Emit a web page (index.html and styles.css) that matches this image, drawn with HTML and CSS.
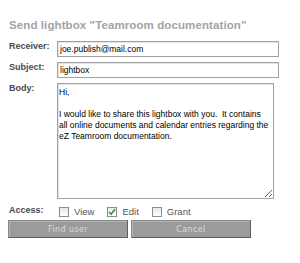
FILE: index.html
```html
<!DOCTYPE html>
<html lang="en">
<head>
    <meta charset="UTF-8">
    <title>Send lightbox</title>
    <link rel="stylesheet" href="styles.css">
</head>
<body>

<div class="send-box">
    <h2 class="send-title">Send lightbox "Teamroom documentation"</h2>

    <!-- Message fields -->
    <div class="send-form">
        <label class="field-label" for="receiver">Receiver:</label>
        <input class="field-input" id="receiver" type="text" value="joe.publish@mail.com">

        <label class="field-label" for="subject">Subject:</label>
        <input class="field-input" id="subject" type="text" value="lightbox">

        <label class="field-label" for="body">Body:</label>
        <textarea class="field-body" id="body" wrap="off">Hi,

I would like to share this lightbox with you.  It contains
all online documents and calendar entries regarding the
eZ Teamroom documentation.</textarea>

        <span class="field-label access-label">Access:</span>
        <div class="access-options">
            <label class="access-option"><span class="check-box"></span>View</label>
            <label class="access-option"><span class="check-box">
                <svg width="8" height="8" viewBox="0 0 8 8"><path d="M1 4 L3 6.2 L7 1.2" fill="none" stroke="#2f9a2f" stroke-width="1.6"/></svg>
            </span>Edit</label>
            <label class="access-option"><span class="check-box"></span>Grant</label>
        </div>
    </div>

    <!-- Buttons -->
    <div class="send-buttons">
        <button class="gray-button">Find user</button>
        <button class="gray-button">Cancel</button>
    </div>
</div>

</body>
</html>
```

FILE: styles.css
```css
/* General */
body {
    margin: 0;
    padding: 0;
    background-color: #fff;
    font-family: 'Liberation Sans', Arial, sans-serif;
}

.send-box {
    padding: 18px 0 0 9px;
}

/* Title */
.send-title {
    margin: 0 0 9px 0;
    font-size: 11.5px;
    line-height: 14px;
    font-weight: bold;
    color: #a3a3a3;
    letter-spacing: 0.1px;
}

/* Form grid */
.send-form {
    display: grid;
    grid-template-columns: 48px 222px;
    row-gap: 5px;
}

.field-label {
    font-size: 9px;
    line-height: 11px;
    font-weight: bold;
    color: #4a4a4a;
}

.field-input {
    box-sizing: border-box;
    width: 222px;
    height: 16px;
    margin: 0;
    padding: 0 2px;
    border: 1px solid #a2a2a2;
    box-shadow: inset 1px 1px 0 #e4e4e4;
    background-color: #fff;
    font-family: 'Liberation Sans', Arial, sans-serif;
    font-size: 8.5px;
    color: #000;
    outline: none;
}

.field-body {
    box-sizing: border-box;
    width: 217px;
    height: 116px;
    margin: 0;
    padding: 3px 1px;
    border: 1px solid #a2a2a2;
    box-shadow: inset 1px 1px 0 #e4e4e4;
    background-color: #fff;
    font-family: 'Liberation Sans', Arial, sans-serif;
    font-size: 8.5px;
    line-height: 11px;
    color: #000;
    overflow: hidden;
    outline: none;
}

/* Access row */
.access-label {
    margin-top: 1px;
}

.access-options {
    display: flex;
    align-items: center;
    padding: 2px 0 0 2px;
}

.access-option {
    display: flex;
    align-items: center;
    font-size: 9.5px;
    color: #555;
    margin-right: 13px;
}

.check-box {
    display: inline-flex;
    align-items: center;
    justify-content: center;
    box-sizing: border-box;
    width: 10px;
    height: 10px;
    margin-right: 5px;
    border: 1px solid #8c8c8c;
    background: linear-gradient(#e9e9e9, #fff);
}

/* Buttons */
.send-buttons {
    display: flex;
    gap: 3px;
    margin: 3px 0 0 -1px;
}

.gray-button {
    width: 120px;
    height: 18px;
    padding: 0;
    border: 1px solid #5e5e5e;
    border-top-color: #8a8a8a;
    border-left-color: #8a8a8a;
    background-color: #9b9b9b;
    box-shadow: inset 1px 1px 0 #b3b3b3;
    color: #dcdcdc;
    font-family: 'DejaVu Sans', Verdana, sans-serif;
    font-size: 8px;
    letter-spacing: 0.4px;
}
```
